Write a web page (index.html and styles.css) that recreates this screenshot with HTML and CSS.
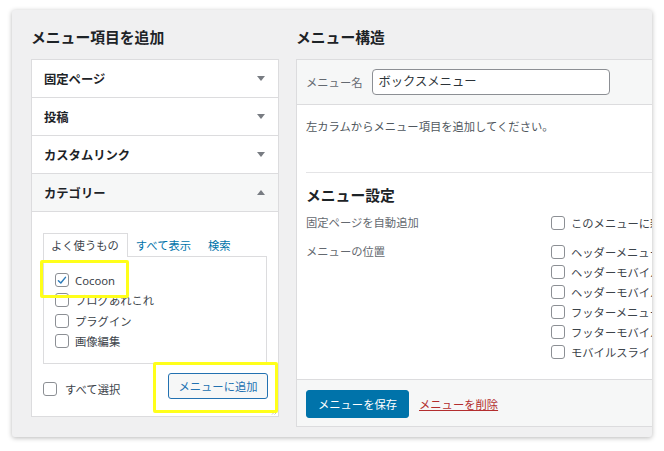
FILE: index.html
```html
<!DOCTYPE html>
<html lang="ja">
<head>
<meta charset="utf-8">
<title>メニュー</title>
<link rel="stylesheet" href="styles.css">
</head>
<body>
<div class="panel">
  <div class="col-left">
    <h2 class="col-title">メニュー項目を追加</h2>
    <div class="acc">
      <div class="acc-row"><span>固定ページ</span><span class="tri down"></span></div>
      <div class="acc-row"><span>投稿</span><span class="tri down"></span></div>
      <div class="acc-row"><span>カスタムリンク</span><span class="tri down"></span></div>
      <div class="acc-row open"><span>カテゴリー</span><span class="tri up"></span></div>
      <div class="acc-body">
        <div class="tabs">
          <span class="tab active">よく使うもの</span>
          <span class="tab">すべて表示</span>
          <span class="tab">検索</span>
        </div>
        <div class="tab-panel">
          <label class="cb-row"><span class="cb checked"><svg viewBox="0 0 16 16" width="13" height="13"><path d="M3.2 8.3 L6.4 11.4 L12.6 3.8" fill="none" stroke="#2e7dbb" stroke-width="2" stroke-linecap="round" stroke-linejoin="round"/></svg></span><span class="cb-label">Cocoon</span></label>
          <label class="cb-row"><span class="cb"></span><span class="cb-label">ブログあれこれ</span></label>
          <label class="cb-row"><span class="cb"></span><span class="cb-label">プラグイン</span></label>
          <label class="cb-row"><span class="cb"></span><span class="cb-label">画像編集</span></label>
        </div>
        <div class="acc-foot">
          <label class="cb-row select-all"><span class="cb"></span><span class="cb-label sel">すべて選択</span></label>
          <button class="btn-secondary">メニューに追加</button>
        </div>
        <svg class="grip" viewBox="0 0 6 6" width="6" height="6"><path d="M5.5 1 L1 5.5 M5.5 3.5 L3.5 5.5" stroke="#b0b3b8" stroke-width="0.8"/></svg>
      </div>
    </div>
  </div>
  <div class="col-right">
    <h2 class="col-title">メニュー構造</h2>
    <div class="menu-box">
      <div class="menu-head">
        <span class="menu-name-label">メニュー名</span>
        <span class="menu-name-input">ボックスメニュー</span>
      </div>
      <div class="menu-body">
        <p class="hint">左カラムからメニュー項目を追加してください。</p>
        <div class="settings">
          <h3 class="settings-title">メニュー設定</h3>
          <div class="set-row">
            <div class="set-label">固定ページを自動追加</div>
            <div class="set-opts">
              <label class="cb-row opt"><span class="cb"></span><span class="cb-label">このメニューに新しいトップレベルページを自動追加</span></label>
            </div>
          </div>
          <div class="set-row second">
            <div class="set-label">メニューの位置</div>
            <div class="set-opts">
              <label class="cb-row opt"><span class="cb"></span><span class="cb-label">ヘッダーメニュー</span></label>
              <label class="cb-row opt"><span class="cb"></span><span class="cb-label">ヘッダーモバイルメニュー</span></label>
              <label class="cb-row opt"><span class="cb"></span><span class="cb-label">ヘッダーモバイルボタン</span></label>
              <label class="cb-row opt"><span class="cb"></span><span class="cb-label">フッターメニュー</span></label>
              <label class="cb-row opt"><span class="cb"></span><span class="cb-label">フッターモバイルボタン</span></label>
              <label class="cb-row opt"><span class="cb"></span><span class="cb-label">モバイルスライドインメニュー</span></label>
            </div>
          </div>
        </div>
      </div>
      <div class="menu-foot">
        <button class="btn-primary">メニューを保存</button>
        <a class="delete-link" href="#">メニューを削除</a>
      </div>
    </div>
  </div>
</div>
<div class="mark mark-cocoon"></div>
<div class="mark mark-add"></div>
</body>
</html>
```

FILE: styles.css
```css
* { box-sizing: border-box; }
html, body { margin: 0; padding: 0; background: #ffffff; }
body {
  font-family: "Noto Sans", "Noto Sans CJK JP", sans-serif;
  font-size: 11.3px;
  color: #3c434a;
  width: 664px;
  height: 451px;
  overflow: hidden;
  position: relative;
}
.panel {
  margin: 10px 0 0 12px;
  width: 640px;
  height: 427px;
  background: #f0f0f1;
  border-radius: 3px;
  box-shadow: 0 1px 5px rgba(0,0,0,0.28);
  overflow: hidden;
  display: flex;
  gap: 17px;
  padding: 16px 0 0 19px;
}
.col-left { width: 248px; flex-shrink: 0; }
.col-right { width: 400px; flex-shrink: 0; }
.col-title {
  margin: 0 0 11px;
  font-size: 14.8px;
  line-height: 22px;
  font-weight: 700;
  color: #1d2327;
}
.acc {
  background: #fff;
  border: 1px solid #dcdcde;
}
.acc-row {
  height: 38px;
  border-bottom: 1px solid #dcdcde;
  display: flex;
  align-items: center;
  justify-content: space-between;
  padding: 0 13px 0 12px;
  font-size: 12.3px;
  font-weight: 700;
  color: #1d2327;
}
.acc-row.open { background: #f6f7f7; }
.tri {
  width: 0; height: 0;
  border-left: 4px solid transparent;
  border-right: 4px solid transparent;
}
.tri.down { border-top: 5px solid #787c82; }
.tri.up { border-bottom: 5px solid #787c82; }
.acc-body {
  padding: 21px 11px 17px 11px;
  position: relative;
}
.tabs { display: flex; align-items: flex-end; height: 23px; }
.tab {
  height: 23px;
  line-height: 23px;
  padding: 0 8px 0 7px;
  color: #0073aa;
  border: 1px solid transparent;
  border-bottom: none;
}
.tab.active {
  color: #3c434a;
  border-color: #dcdcde;
  background: #fff;
  position: relative;
  z-index: 1;
  height: 24px;
  margin-bottom: -1px;
}
.tab-panel {
  border: 1px solid #dcdcde;
  height: 108px;
  padding: 13px 11px 0 11px;
}
.cb-row {
  display: flex;
  align-items: center;
  height: 20.3px;
  gap: 6px;
  color: #3c434a;
}
.cb {
  width: 14px;
  height: 14px;
  border: 1px solid #8c8f94;
  border-radius: 3px;
  background: #fff;
  display: inline-flex;
  align-items: center;
  justify-content: center;
  flex-shrink: 0;
}
.cb-label { white-space: nowrap; }
.acc-foot {
  margin-top: 9px;
  display: flex;
  align-items: center;
  justify-content: space-between;
  height: 26px;
}
.select-all { margin-top: 6px; gap: 8px; }
.btn-secondary {
  font-family: inherit;
  font-size: 11.3px;
  height: 26px;
  width: 100px;
  margin-right: -1px;
  padding: 0;
  background: #f6f7f7;
  color: #2271b1;
  border: 1px solid #2271b1;
  border-radius: 3px;
}
.grip { position: absolute; right: 1px; bottom: 1px; }
.menu-box {
  background: #fff;
  border: 1px solid #dcdcde;
}
.menu-head {
  height: 45px;
  background: #f6f7f7;
  border-bottom: 1px solid #dcdcde;
  display: flex;
  align-items: center;
  padding-left: 9px;
  gap: 9px;
  color: #646970;
}
.menu-name-input {
  width: 238px;
  height: 26px;
  border: 1px solid #8c8f94;
  border-radius: 4px;
  background: #fff;
  padding-left: 6px;
  font-size: 12.3px;
  line-height: 24px;
  color: #2c3338;
}
.menu-body { padding: 12px 0 0 9px; }
.hint {
  margin: 0;
  line-height: 20px;
  color: #50575e;
}
.settings {
  margin-top: 35px;
  border-top: 1px solid #e4e4e6;
  padding: 11px 0 17px 0;
}
.settings-title {
  margin: 0;
  font-size: 14.8px;
  line-height: 22px;
  font-weight: 700;
  color: #1d2327;
}
.set-row { display: flex; margin-top: 7px; }
.set-row.second { margin-top: 9px; }
.set-label {
  width: 245px;
  line-height: 20px;
  color: #646970;
  flex-shrink: 0;
}
.set-opts { display: flex; flex-direction: column; }
.opt { height: 20px; }
.menu-foot {
  background: #f6f7f7;
  border-top: 1px solid #dcdcde;
  height: 47px;
  display: flex;
  align-items: center;
  padding: 1px 0 0 9px;
  gap: 10px;
}
.btn-primary {
  font-family: inherit;
  font-size: 11.3px;
  width: 103px;
  height: 28px;
  padding: 0;
  background: #0073aa;
  color: #fff;
  border: 1px solid #0073aa;
  border-radius: 3px;
}
.delete-link {
  color: #b32d2e;
  text-decoration: underline;
}
.mark {
  position: absolute;
  border: 3px solid #ffff1a;
  border-radius: 2px;
}
.mark-cocoon { left: 40px; top: 260px; width: 89px; height: 38px; }
.mark-add { left: 153px; top: 362px; width: 125px; height: 51px; }
```
